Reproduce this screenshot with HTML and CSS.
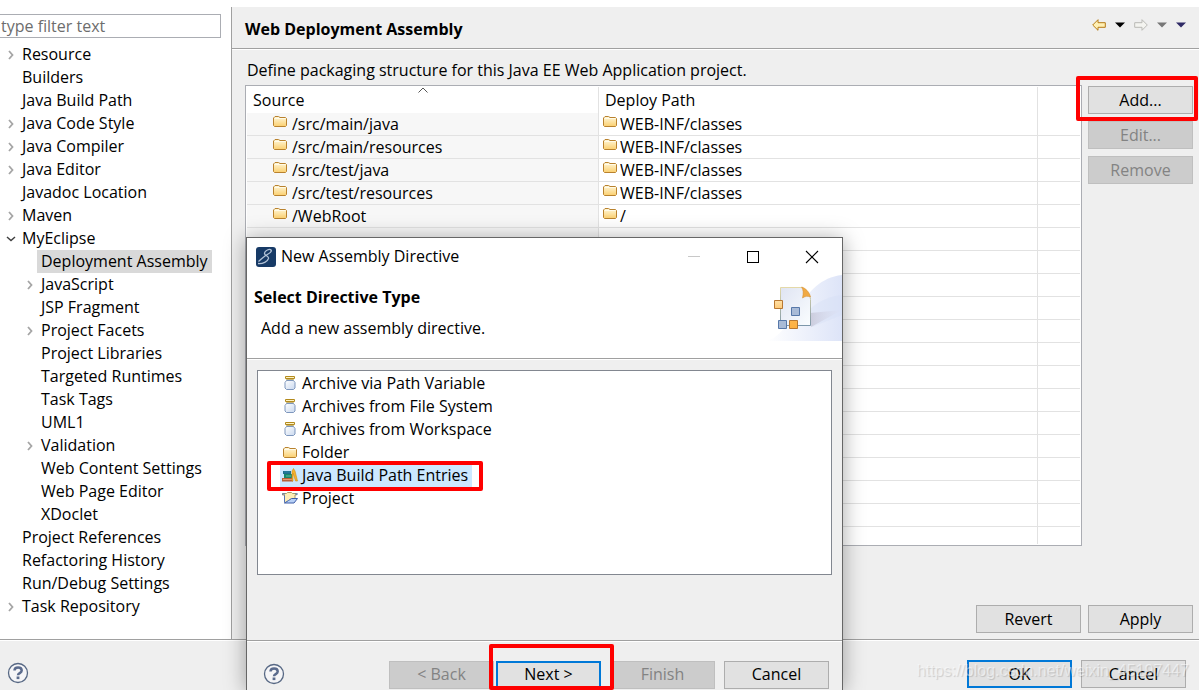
FILE: index.html
```html
<!DOCTYPE html>
<html lang="en">
<head>
<meta charset="utf-8">
<title>Web Deployment Assembly</title>
<link rel="stylesheet" href="styles.css">
</head>
<body>
<svg class="defs" aria-hidden="true">
  <defs>
    <linearGradient id="g-folder" x1="0" y1="0" x2="0" y2="1"><stop offset="0" stop-color="#fff8dc"/><stop offset="1" stop-color="#fbcf6e"/></linearGradient>
    <linearGradient id="g-jar" x1="0" y1="0" x2="1" y2="1"><stop offset="0" stop-color="#fff"/><stop offset="1" stop-color="#c9d8ee"/></linearGradient>
    <symbol id="folder" viewBox="0 0 14 12"><path d="M.5 10.500V3L2 1.500h3.500L7 2.500h5.500l1 1v7l-1 1h-11z" fill="url(#g-folder)" stroke="#b9822e"/><path d="M1.500 3.500h11" stroke="#fffbe8" fill="none"/></symbol>
    <symbol id="jar" viewBox="0 0 12 14"><path d="M1.500.5h9v2h-9z" fill="#fff3c2" stroke="#b38a1d"/><path d="M2.500 3.500h7v1h-7z" fill="#fff" stroke="#c5b273"/><path d="M2.500 4.500h7l1.500 2v5.500l-1.500 1.500h-7L1 12V6.500z" fill="url(#g-jar)" stroke="#7e97bd"/></symbol>
    <symbol id="books" viewBox="0 0 16 14"><path d="M1 3h8v3H1z" fill="#1d6d8e"/><path d="M2 4h6" stroke="#2b86a6"/><path d="M2 6h8v4H2z" fill="#16876b"/><path d="M4 8h5" stroke="#65bd9c"/><path d="M0 10h11v3.500H0z" fill="#b95f37"/><path d="M1 11.500h9" stroke="#e69a70"/><path d="M10 3l1.500-2.500L13 3l2.500 10h-2L11 5v8h-1z" fill="#f5b32d" stroke="#d08d16" stroke-width=".6"/></symbol>
    <symbol id="project" viewBox="0 0 16 13"><path d="M2.500 11V3.500h-2v-1.500h4l1-1h4l1 1h4v1.500h-1.500V7" fill="#fdeeb5" stroke="#a89a68"/><path d="M0 2.500h3M13 2.500h3M2.500 4v7" stroke="#5475b5"/><path d="M2.500 11.500L6.500 9l3-2h6L12 11.500z" fill="#b7d0f6" stroke="#3e5ea8"/></symbol>
    <symbol id="chev" viewBox="0 0 6 10"><path d="M1 1l3.500 4L1 9" fill="none" stroke="#a5a5a5" stroke-width="1.800"/></symbol>
    <symbol id="help" viewBox="0 0 22 22"><circle cx="11" cy="11" r="9.500" fill="#f5f5f7" stroke="#576884" stroke-width="1.300"/><path d="M7.500 8.500c0-4 7.200-4 7.200 0 0 2.600-3.700 2.500-3.700 4.700" fill="none" stroke="#5b6b8d" stroke-width="2.500"/><rect x="9.600" y="14.500" width="2.800" height="2.600" fill="#5b6b8d"/></symbol>
    <symbol id="arrow" viewBox="0 0 14 12"><path d="M.7 6L6 .7v3h7.300v4.600H6v3z"/></symbol>
    <symbol id="tri" viewBox="0 0 10 6"><path d="M0 .5h10l-5 5z"/></symbol>
  </defs>
</svg>

<div class="shell">
  <div class="workspace">
    <nav class="sidebar" aria-label="Preferences">
      <input class="filter" type="text" placeholder="type filter text" aria-label="Filter">
      <ul class="tree">
        <li><button class="toggle" aria-label="Expand"><svg><use href="#chev"/></svg></button><span class="label">Resource</span></li>
        <li><span class="label">Builders</span></li>
        <li><span class="label">Java Build Path</span></li>
        <li><button class="toggle" aria-label="Expand"><svg><use href="#chev"/></svg></button><span class="label">Java Code Style</span></li>
        <li><button class="toggle" aria-label="Expand"><svg><use href="#chev"/></svg></button><span class="label">Java Compiler</span></li>
        <li><button class="toggle" aria-label="Expand"><svg><use href="#chev"/></svg></button><span class="label">Java Editor</span></li>
        <li><span class="label">Javadoc Location</span></li>
        <li><button class="toggle" aria-label="Expand"><svg><use href="#chev"/></svg></button><span class="label">Maven</span></li>
        <li><button class="toggle open" aria-label="Collapse"><svg viewBox="0 0 10 6"><path d="M1 1l4 3.500L9 1" fill="none" stroke="#404040" stroke-width="1.500"/></svg></button><span class="label">MyEclipse</span></li>
        <li class="child"><span class="label selected">Deployment Assembly</span></li>
        <li class="child"><button class="toggle" aria-label="Expand"><svg><use href="#chev"/></svg></button><span class="label">JavaScript</span></li>
        <li class="child"><span class="label">JSP Fragment</span></li>
        <li class="child"><button class="toggle" aria-label="Expand"><svg><use href="#chev"/></svg></button><span class="label">Project Facets</span></li>
        <li class="child"><span class="label">Project Libraries</span></li>
        <li class="child"><span class="label">Targeted Runtimes</span></li>
        <li class="child"><span class="label">Task Tags</span></li>
        <li class="child"><span class="label">UML1</span></li>
        <li class="child"><button class="toggle" aria-label="Expand"><svg><use href="#chev"/></svg></button><span class="label">Validation</span></li>
        <li class="child"><span class="label">Web Content Settings</span></li>
        <li class="child"><span class="label">Web Page Editor</span></li>
        <li class="child"><span class="label">XDoclet</span></li>
        <li><span class="label">Project References</span></li>
        <li><span class="label">Refactoring History</span></li>
        <li><span class="label">Run/Debug Settings</span></li>
        <li><button class="toggle" aria-label="Expand"><svg><use href="#chev"/></svg></button><span class="label">Task Repository</span></li>
      </ul>
    </nav>

    <main class="page">
      <header class="page-head">
        <h1>Web Deployment Assembly</h1>
        <div class="history">
          <button class="nav back" aria-label="Back"><svg class="arrow"><use href="#arrow"/></svg></button>
          <button class="nav" aria-label="Back history"><svg class="tri"><use href="#tri"/></svg></button>
          <button class="nav forward" aria-label="Forward"><svg class="arrow"><use href="#arrow"/></svg></button>
          <button class="nav dim" aria-label="Forward history"><svg class="tri"><use href="#tri"/></svg></button>
          <button class="nav menu" aria-label="Menu"><svg class="tri"><use href="#tri"/></svg></button>
        </div>
      </header>
      <div class="content">
        <p class="intro">Define packaging structure for this Java EE Web Application project.</p>
        <div class="columns">
          <div class="table-box">
            <table class="assembly">
              <colgroup><col class="c-source"><col class="c-path"><col></colgroup>
              <thead>
                <tr><th>Source<svg class="sort" viewBox="0 0 10 6"><path d="M.5 5.500l4.500-4.500 4.500 4.500" fill="none" stroke="#555"/></svg></th><th>Deploy Path</th><th></th></tr>
              </thead>
              <tbody>
                <tr><td><span class="cell"><svg class="folder"><use href="#folder"/></svg>/src/main/java</span></td><td><span class="cell"><svg class="folder"><use href="#folder"/></svg>WEB-INF/classes</span></td><td></td></tr>
                <tr><td><span class="cell"><svg class="folder"><use href="#folder"/></svg>/src/main/resources</span></td><td><span class="cell"><svg class="folder"><use href="#folder"/></svg>WEB-INF/classes</span></td><td></td></tr>
                <tr><td><span class="cell"><svg class="folder"><use href="#folder"/></svg>/src/test/java</span></td><td><span class="cell"><svg class="folder"><use href="#folder"/></svg>WEB-INF/classes</span></td><td></td></tr>
                <tr><td><span class="cell"><svg class="folder"><use href="#folder"/></svg>/src/test/resources</span></td><td><span class="cell"><svg class="folder"><use href="#folder"/></svg>WEB-INF/classes</span></td><td></td></tr>
                <tr><td><span class="cell"><svg class="folder"><use href="#folder"/></svg>/WebRoot</span></td><td><span class="cell"><svg class="folder"><use href="#folder"/></svg>/</span></td><td></td></tr>
                <tr><td></td><td></td><td></td></tr>
                <tr><td></td><td></td><td></td></tr>
                <tr><td></td><td></td><td></td></tr>
                <tr><td></td><td></td><td></td></tr>
                <tr><td></td><td></td><td></td></tr>
                <tr><td></td><td></td><td></td></tr>
                <tr><td></td><td></td><td></td></tr>
                <tr><td></td><td></td><td></td></tr>
                <tr><td></td><td></td><td></td></tr>
                <tr><td></td><td></td><td></td></tr>
                <tr><td></td><td></td><td></td></tr>
                <tr><td></td><td></td><td></td></tr>
                <tr><td></td><td></td><td></td></tr>
                <tr class="rest"><td></td><td></td><td></td></tr>
              </tbody>
            </table>
          </div>
          <div class="actions">
            <div class="marked mark-add"><button class="btn">Add...</button></div>
            <button class="btn" disabled>Edit...</button>
            <button class="btn" disabled>Remove</button>
          </div>
        </div>
        <div class="page-buttons">
          <button class="btn">Revert</button>
          <button class="btn">Apply</button>
        </div>
      </div>
    </main>
  </div>

  <footer class="bottom">
    <button class="help" aria-label="Help"><svg><use href="#help"/></svg></button>
    <div class="bottom-buttons">
      <button class="btn primary">OK</button>
      <button class="btn">Cancel</button>
    </div>
    <span class="watermark">https://blog.csdn.net/weixin_45197447</span>
  </footer>

  <section class="dialog" role="dialog" aria-labelledby="dialog-title">
    <div class="titlebar">
      <svg class="app" viewBox="0 0 20 20"><rect width="20" height="20" rx="3" fill="#173a66"/><path d="M2 16.500c5 .500 9.500-2 10.500-5 .8-2.700-4.500-2.700-4-5.500C9 3.500 13.500 1.500 15 3c1.500 2-3 4-6 6-3 2-4 3.500-6.500 5.500" fill="none" stroke="#b4c4d8" stroke-width="1.300"/></svg>
      <span id="dialog-title" class="title">New Assembly Directive</span>
      <div class="window-buttons">
        <button class="nav" aria-label="Minimize" disabled><svg viewBox="0 0 12 12"><path d="M0 5.500h12" stroke="#c8c8c8"/></svg></button>
        <button class="nav" aria-label="Maximize"><svg viewBox="0 0 12 12"><rect x=".5" y=".5" width="11" height="11" fill="none" stroke="#000"/></svg></button>
        <button class="nav" aria-label="Close"><svg viewBox="0 0 12 12"><path d="M0 0l12 12M12 0L0 12" stroke="#000" stroke-width="1.100"/></svg></button>
      </div>
    </div>
    <div class="dialog-head">
      <div class="dialog-text">
        <h2>Select Directive Type</h2>
        <p>Add a new assembly directive.</p>
      </div>
      <svg class="banner" viewBox="0 0 75 66" aria-hidden="true">
        <defs>
          <linearGradient id="b1"><stop offset="0" stop-color="#fff"/><stop offset="1" stop-color="#dde4f8"/></linearGradient>
          <linearGradient id="b2" x1="0" y1="0" x2="1" y2="1"><stop offset="0" stop-color="#dfe4f2"/><stop offset="1" stop-color="#fafdff"/></linearGradient>
          <linearGradient id="b3" x1="0" y1="0" x2="0" y2="1"><stop offset="0" stop-color="#e4d9a8"/><stop offset="1" stop-color="#7d97aa"/></linearGradient>
          <linearGradient id="b4"><stop offset="0" stop-color="#bbb8ca"/><stop offset="1" stop-color="#dfe1f1" stop-opacity=".2"/></linearGradient>
          <linearGradient id="b5" x1="0" y1="0" x2="0" y2="1"><stop offset="0" stop-color="#ffe0a6"/><stop offset=".5" stop-color="#fdb956"/><stop offset="1" stop-color="#fdb040"/></linearGradient>
        </defs>
        <path d="M0 66C30 56 32 5 75 0v66z" fill="url(#b1)"/>
        <path d="M42 35C52 25 65 21 75 20v20L45 52z" fill="#d5def6" opacity=".4"/>
        <path d="M43 38l32-3-31 17z" fill="url(#b4)" opacity=".6"/>
        <path d="M13.500 12.500h21c4 1 9 7 9 12v26h-30z" fill="url(#b2)" stroke="url(#b3)"/>
        <path d="M34.500 12c4 1 8 5 9 10-3-1-5-1-8 1 1-5 1-8-1-11z" fill="#f0a943" stroke="#d28b2c" stroke-width=".5"/>
        <g stroke="#b87731"><path d="M7.500 25.500h8v8h-8zM22.500 45.500h8v8h-8z" fill="url(#b5)"/></g>
        <g stroke="#5778a9" fill="#a9bbd7"><path d="M24.500 32.500h8v8h-8zM11.500 45.500h8v8h-8z"/></g>
      </svg>
    </div>
    <div class="dialog-body">
      <ul class="types">
        <li><svg class="jar"><use href="#jar"/></svg><span>Archive via Path Variable</span></li>
        <li><svg class="jar"><use href="#jar"/></svg><span>Archives from File System</span></li>
        <li><svg class="jar"><use href="#jar"/></svg><span>Archives from Workspace</span></li>
        <li><svg class="folder"><use href="#folder"/></svg><span>Folder</span></li>
        <li class="marked mark-type chosen"><svg class="books"><use href="#books"/></svg><span>Java Build Path Entries</span></li>
        <li><svg class="project"><use href="#project"/></svg><span>Project</span></li>
      </ul>
    </div>
    <div class="dialog-foot">
      <button class="help" aria-label="Help"><svg><use href="#help"/></svg></button>
      <div class="steps">
        <button class="btn" disabled>&lt; Back</button>
        <div class="marked mark-next"><button class="btn primary">Next &gt;</button></div>
      </div>
      <button class="btn" disabled>Finish</button>
      <button class="btn">Cancel</button>
    </div>
  </section>
</div>
</body>
</html>
```

FILE: styles.css
```css
* { box-sizing: border-box; }

body {
  margin: 0;
  background: #fff;
  color: #000;
  font: 16px/23px "Open Sans", "Noto Sans", sans-serif;
}

button, input { font: inherit; color: inherit; }
button { padding: 0; border: 0; background: none; }
svg { display: block; flex: none; }
ul { margin: 0; padding: 0; list-style: none; }
h1, h2, p { margin: 0; }
h1, h2 { font-size: 16px; line-height: 24px; font-weight: 700; }

.defs { position: absolute; width: 0; height: 0; }

.shell {
  position: relative;
  display: flex;
  flex-direction: column;
  min-height: 100vh;
  padding-top: 7px;
  overflow: hidden;
}

.workspace { display: flex; flex: 1; }

/* Sidebar */
.sidebar {
  width: 232px;
  flex: none;
  padding-top: 7px;
  border-right: 1px solid #a0a0a0;
}
.filter {
  display: block;
  width: 221px;
  height: 24px;
  padding: 0 1px;
  border: 1px solid #abadb3;
  border-left: 0;
  border-radius: 0;
  background: #fff;
}
.filter::placeholder { color: #6d6d6d; opacity: 1; }
.tree { padding-top: 5px; }
.tree li { display: flex; height: 23px; padding-left: 18px; white-space: nowrap; }
.tree li.child { padding-left: 37px; }
.label { padding: 0 4px; }
.selected { background: #d9d9d9; }
.toggle {
  display: grid;
  place-items: center;
  width: 14px;
  margin-left: -14px;
}
.toggle svg { width: 6px; height: 10px; }
.toggle.open svg { width: 10px; height: 6px; }

/* Page */
.page { flex: 1; min-width: 0; display: flex; flex-direction: column; background: #efefef; }
.page-head {
  display: flex;
  align-items: center;
  justify-content: space-between;
  height: 42px;
  padding: 0 13px;
  border-bottom: 1px solid #a0a0a0;
  box-shadow: 0 1px #fff;
}
.page-head h1 { padding-top: 2px; }
.history { display: flex; align-items: center; gap: 9px; padding-bottom: 6px; }
.nav { display: grid; place-items: center; }
.arrow { width: 14px; height: 12px; }
.tri { width: 10px; height: 6px; }
.back { fill: #fff0b4; stroke: #b57a16; }
.forward { fill: #f4f4f0; stroke: #b9b9b5; }
.forward svg { transform: scaleX(-1); }
.dim { fill: #777; }
.menu { fill: #2f2a66; }

.content { flex: 1; display: flex; flex-direction: column; padding: 10px 6px 6px 13px; }
.intro { padding-left: 2px; margin-bottom: 3px; }
.columns { display: flex; gap: 6px; }
.table-box { flex: 1; min-width: 0; padding: 1px; border: 1px solid #abadb3; background: #fff; }
.assembly { width: 100%; border-collapse: separate; border-spacing: 0; table-layout: fixed; }
.c-source { width: 352px; }
.c-path { width: 439px; }
.assembly th {
  position: relative;
  height: 26px;
  padding: 0 6px;
  border-right: 1px solid #e2e2e2;
  font-weight: 400;
  line-height: 26px;
  text-align: left;
}
.sort { position: absolute; top: 0; right: 0; left: 0; width: 10px; height: 6px; margin: 0 auto; }
.assembly td {
  height: 23px;
  padding: 0 0 0 4px;
  border-right: 1px solid #e2e2e2;
  border-bottom: 1px solid #e2e2e2;
  line-height: 22px;
}
.assembly td:first-child { padding-left: 26px; background: #f7f7f7; }
.assembly tr > :last-child { border-right: 0; }
.assembly .rest td { height: 17px; border-bottom: 0; }
.cell { display: flex; gap: 5px; height: 22px; }
.assembly td + td .cell { gap: 3px; }
.folder { width: 14px; height: 12px; }
.cell .folder { margin-top: 2px; }

.actions { display: flex; flex-direction: column; gap: 7px; padding-top: 1px; }
.btn {
  display: block;
  width: 105px;
  height: 28px;
  border: 1px solid #adadad;
  background: #e1e1e1;
  text-align: center;
}
.btn:disabled { border-color: #bfbfbf; background: #ccc; color: #838383; }
.btn.primary { border: 2px solid #0078d7; }
.page-buttons { display: flex; justify-content: flex-end; gap: 7px; margin-top: auto; }

/* Bottom bar */
.bottom {
  position: relative;
  display: flex;
  align-items: center;
  justify-content: space-between;
  height: 51px;
  padding: 18px 13px 0 7px;
  border-top: 1px solid #a0a0a0;
  box-shadow: inset 0 1px #fff;
  background: #efefef;
}
.bottom-buttons { display: flex; gap: 9px; }
.help { padding-bottom: 2px; }
.help svg { width: 22px; height: 22px; }
.watermark {
  position: absolute;
  right: 10px;
  bottom: 7px;
  color: rgba(255, 255, 255, 0.5);
  font: 16px/24px "Liberation Sans", sans-serif;
  text-shadow: 1px 1px 1px rgba(0, 0, 0, 0.15);
  pointer-events: none;
}

/* Highlight frames */
.marked { position: relative; }
.marked::after {
  content: "";
  position: absolute;
  z-index: 1;
  border: 4px solid #f00;
  border-radius: 2px;
  pointer-events: none;
}
.mark-add::after { inset: -10px -5px -7px -12px; }
.mark-type::after { inset: -3px -11px -4px -13px; }
.mark-next::after { inset: -17px -13px -1px -7px; }

/* Dialog */
.dialog {
  position: absolute;
  top: 237px;
  bottom: 0;
  left: 246px;
  width: 597px;
  display: flex;
  flex-direction: column;
  border: 1px solid #666;
  border-bottom: 0;
  background: #efefef;
  box-shadow: 0 2px 20px rgba(0, 0, 0, 0.35);
}
.titlebar { display: flex; align-items: center; gap: 5px; height: 37px; padding: 0 24px 0 9px; background: #fff; }
.app { width: 20px; height: 20px; }
.window-buttons { display: flex; gap: 47px; margin-left: auto; }
.window-buttons svg { width: 12px; height: 12px; overflow: visible; }
.dialog-head {
  display: flex;
  justify-content: space-between;
  height: 84px;
  padding-left: 7px;
  border-bottom: 1px solid #a0a0a0;
  background: #fff;
}
.dialog-text { padding-top: 10px; }
.dialog-text p { padding: 8px 7px 0; }
.banner { width: 75px; height: 66px; }
.dialog-body { flex: 1; padding: 10px 10px 65px; border-top: 1px solid #fff; }
.types { height: 100%; padding: 1px 22px; border: 1px solid #828790; background: #fff; }
.types li { display: flex; align-items: center; width: fit-content; height: 23px; padding-right: 4px; }
.types .jar { width: 12px; height: 14px; margin: 0 6px 2px 4px; }
.types .folder { margin: 0 5px 2px 3px; }
.types .books, .types .project { width: 16px; height: 14px; margin: 0 4px 2px 2px; }
.types .chosen { background: #cce8ff; }
.dialog-foot {
  display: flex;
  align-items: center;
  gap: 9px;
  height: 50px;
  padding: 18px 13px 0 16px;
  border-top: 1px solid #a0a0a0;
  box-shadow: inset 0 1px #fff;
}
.steps { display: flex; gap: 2px; margin-left: auto; }
```
